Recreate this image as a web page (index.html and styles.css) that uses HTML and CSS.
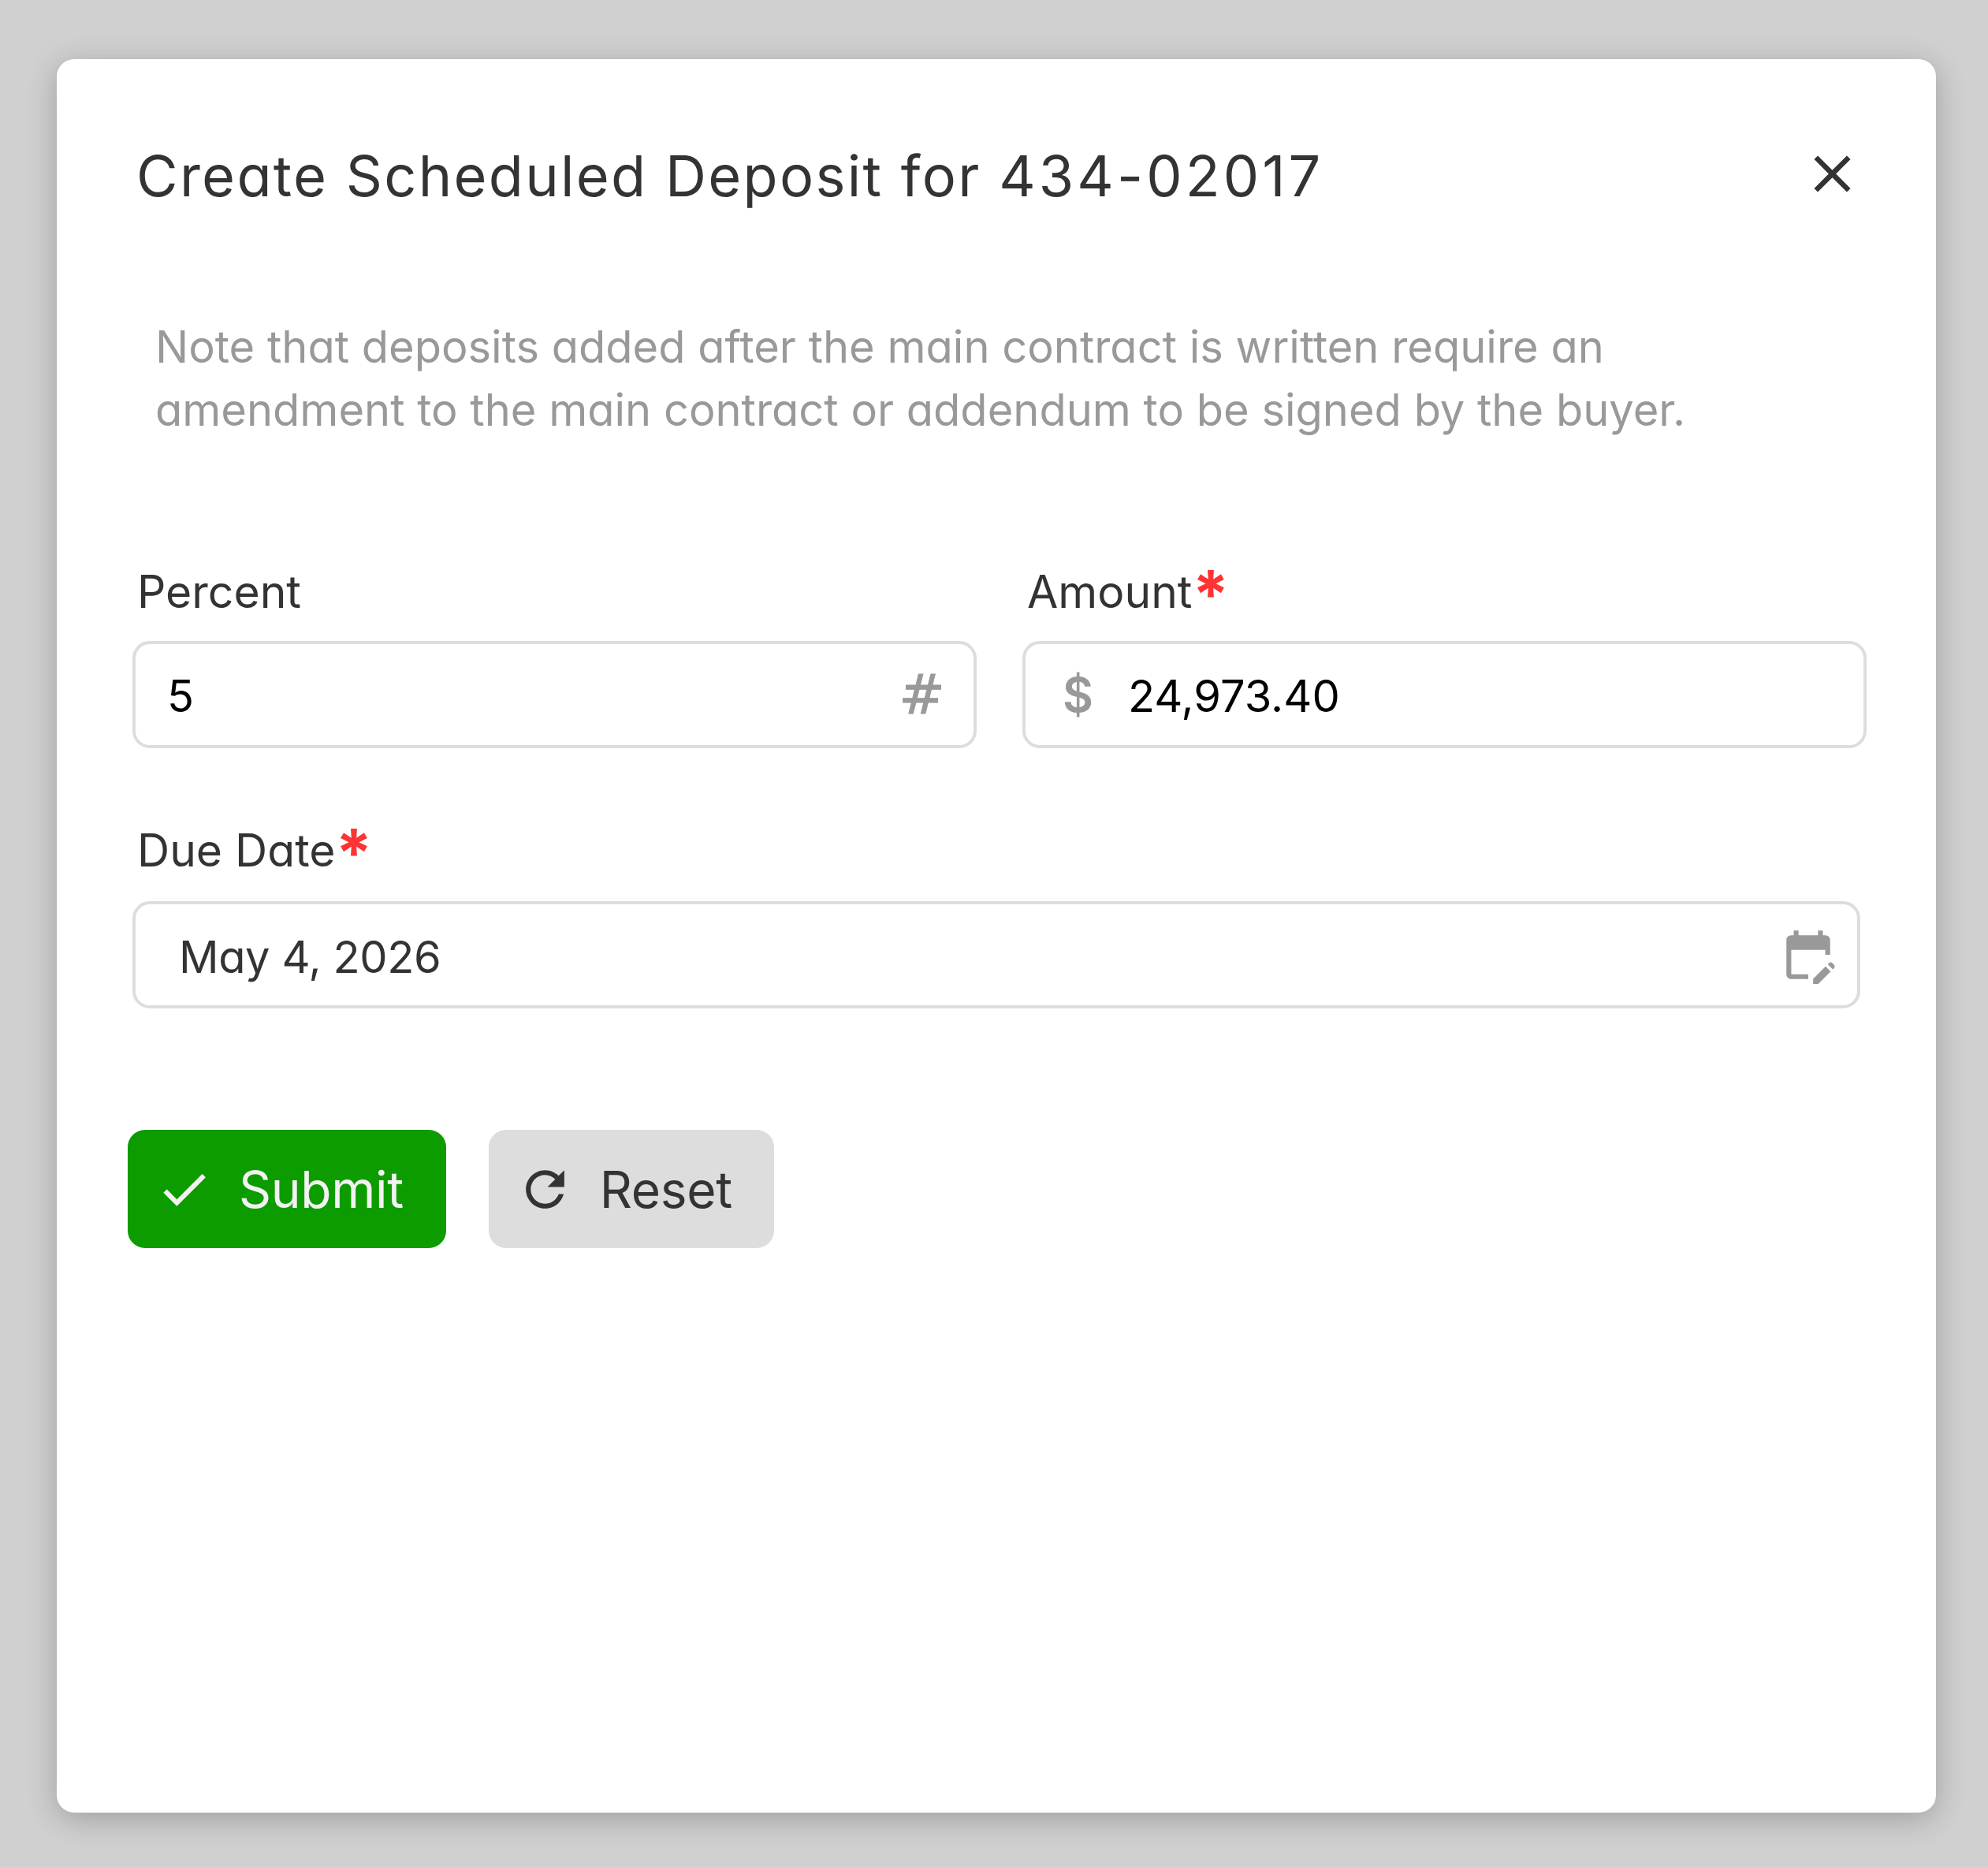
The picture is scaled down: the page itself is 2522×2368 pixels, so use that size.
FILE: index.html
```html
<!DOCTYPE html>
<html lang="en">
<head>
    <meta charset="UTF-8">
    <meta name="viewport" content="width=device-width, initial-scale=1.0">
    <title>Create Scheduled Deposit</title>
    <link rel="stylesheet" href="styles.css">
</head>
<body>
    <div class="modal">
        <div class="modal-header">
            <h1>Create Scheduled Deposit for <span class="contract-no">434-02017</span></h1>
            <button class="close-button" aria-label="Close">
                <svg viewBox="0 0 24 24"><path d="M19 6.41L17.59 5 12 10.59 6.41 5 5 6.41 10.59 12 5 17.59 6.41 19 12 13.41 17.59 19 19 17.59 13.41 12z"/></svg>
            </button>
        </div>

        <p class="note">Note that deposits added after the main contract is written require an<br>amendment to the main contract or addendum to be signed by the buyer.</p>

        <div class="field-row">
            <div class="field field-percent">
                <label>Percent</label>
                <div class="input-box percent-box">
                    <input type="text" value="5">
                    <span class="adornment hash">#</span>
                </div>
            </div>
            <div class="field field-amount">
                <label>Amount<span class="required">*</span></label>
                <div class="input-box amount-box">
                    <span class="adornment dollar">$</span>
                    <input type="text" value="24,973.40">
                </div>
            </div>
        </div>

        <div class="field field-date">
            <label>Due Date<span class="required">*</span></label>
            <div class="input-box date-box">
                <input type="text" value="May 4, 2026">
                <svg class="calendar-icon" viewBox="0 0 24 24"><path d="M5 10h14v2h2V6c0-1.1-.9-2-2-2h-1V2h-2v2H8V2H6v2H5c-1.1 0-2 .9-2 2v14c0 1.1.9 2 2 2h7v-2H5V10z"/><path d="M22.6 16.1l-.7-.7c-.4-.4-1-.4-1.4 0l-.5.5 2.1 2.1.5-.5c.4-.4.4-1 0-1.4zM14 21.9V24h2.1l5.1-5.1-2.1-2.1L14 21.9z"/></svg>
            </div>
        </div>

        <div class="actions">
            <button class="btn btn-submit">
                <svg viewBox="0 0 24 24"><path d="M9 16.17L4.83 12l-1.42 1.41L9 19 21 7l-1.41-1.41z"/></svg>
                Submit
            </button>
            <button class="btn btn-reset">
                <svg viewBox="0 0 24 24"><path d="M17.65 6.35C16.2 4.9 14.21 4 12 4c-4.42 0-7.99 3.58-7.99 8s3.57 8 7.99 8c3.73 0 6.84-2.55 7.73-6h-2.08c-.82 2.33-3.04 4-5.65 4-3.31 0-6-2.69-6-6s2.69-6 6-6c1.66 0 3.14.69 4.22 1.78L13 11h7V4l-2.35 2.35z"/></svg>
                Reset
            </button>
        </div>
    </div>
</body>
</html>
```

FILE: styles.css
```css
* {
    box-sizing: border-box;
}

body {
    margin: 0;
    min-height: 100vh;
    display: flex;
    padding: 75px 66px 69px 72px;
    background-color: #d0d0d0;
    font-family: Inter, "Noto Sans", sans-serif;
    font-feature-settings: "cv11" 1;
    color: #333;
}

.modal {
    flex: 1;
    min-width: 0;
    padding: 98px 88px 0 96px;
    background-color: #fff;
    border-radius: 22px;
    box-shadow: 0 8px 38px rgba(0, 0, 0, 0.24);
}

.modal-header {
    display: flex;
    align-items: center;
    justify-content: space-between;
    height: 100px;
}

h1 {
    margin: 0 0 0 5px;
    font-size: 72px;
    font-weight: 400;
    line-height: 100px;
    letter-spacing: 2.3px;
}

.contract-no {
    letter-spacing: 4.1px;
}

.close-button {
    width: 79px;
    height: 79px;
    margin: -6px 4px 0 0;
    padding: 0;
    border: none;
    background: none;
}

.close-button svg {
    display: block;
    fill: #333;
}

.note {
    margin: 127px 0 0 29px;
    font-size: 56px;
    line-height: 80px;
    color: #999;
}

.field-row {
    display: flex;
    gap: 58px;
    margin-top: 161px;
}

.field-percent {
    width: 1071px;
}

.field-amount {
    width: 1071px;
}

.field-date {
    width: 2192px;
    margin-top: 100px;
}

.field-date label {
    margin-bottom: 34px;
}

label {
    display: block;
    height: 60px;
    margin-left: 6px;
    margin-bottom: 32px;
    font-size: 57px;
    line-height: 60px;
}

.required {
    font-size: 84px;
    font-weight: 700;
    line-height: 0;
    color: #f33;
    vertical-align: -13px;
}

.input-box {
    display: flex;
    align-items: center;
    height: 136px;
    border: 4px solid #ddd;
    border-radius: 22px;
}

.input-box input {
    flex: 1;
    min-width: 0;
    padding: 4px 0 0;
    border: none;
    outline: none;
    background: none;
    font-family: inherit;
    font-feature-settings: inherit;
    font-size: 56px;
    color: #000;
}

.percent-box {
    padding: 0 36px 0 40px;
}

.amount-box {
    padding: 0 40px 0 47px;
}

.date-box {
    padding: 0 25px 0 55px;
}

.date-box input {
    padding-top: 6px;
    letter-spacing: -0.4px;
    color: #333;
}

.adornment {
    color: #999;
}

.hash {
    font-family: "DejaVu Sans", sans-serif;
    font-size: 70px;
    -webkit-text-stroke: 1px #999;
}

.dollar {
    margin-right: 44px;
    font-size: 60px;
    font-weight: 600;
}

.calendar-icon {
    width: 74px;
    height: 74px;
    fill: #999;
}

.actions {
    display: flex;
    gap: 54px;
    margin-top: 154px;
    margin-left: -6px;
}

.btn {
    display: flex;
    align-items: center;
    gap: 33px;
    height: 150px;
    padding: 0 54px 0 35px;
    border: none;
    border-radius: 22px;
    font-family: inherit;
    font-feature-settings: inherit;
    font-size: 64px;
    letter-spacing: -0.3px;
}

.btn svg {
    width: 73px;
    height: 73px;
    fill: currentColor;
}

.btn-submit {
    background-color: #0d9c00;
    color: #f2f2f2;
}

.btn-reset {
    padding-right: 53px;
    background-color: #ddd;
    color: #333;
}
```
